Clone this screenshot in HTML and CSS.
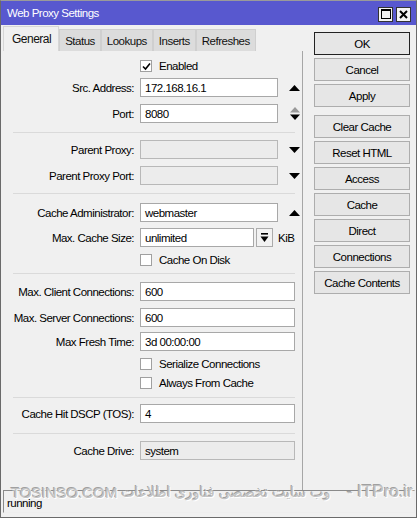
FILE: index.html
```html
<!DOCTYPE html>
<html lang="en">
<head>
    <meta charset="UTF-8">
    <title>Web Proxy Settings</title>
    <link rel="stylesheet" href="styles.css">
</head>
<body>

<div class="window">
    <div class="titlebar">
        <span class="title">Web Proxy Settings</span>
        <div class="title-buttons">
            <span class="tbtn">
                <svg width="10" height="10" viewBox="0 0 10 10"><rect x="0.5" y="0.5" width="9" height="9" fill="none" stroke="#000"/><rect x="0" y="0" width="10" height="2" fill="#000"/></svg>
            </span>
            <span class="tbtn">
                <svg width="9" height="9" viewBox="0 0 9 9"><path d="M1 1L8 8M8 1L1 8" stroke="#000" stroke-width="2"/></svg>
            </span>
        </div>
    </div>

    <div class="body">
        <div class="main">
            <div class="tabs">
                <span class="tab active">General</span>
                <span class="tab">Status</span>
                <span class="tab">Lookups</span>
                <span class="tab">Inserts</span>
                <span class="tab">Refreshes</span>
            </div>

            <div class="panel">
                <!-- enabled / address / port -->
                <div class="section s1">
                    <div class="row check-row r-enabled">
                        <span></span>
                        <label class="check"><span class="box checked"><svg width="9" height="9" viewBox="0 0 9 9"><path d="M1 4.5L3.5 7L8 1.5" fill="none" stroke="#000" stroke-width="1.6"/></svg></span>Enabled</label>
                    </div>
                    <div class="row r-src">
                        <span class="lbl">Src. Address:</span>
                        <span class="input short">172.168.16.1</span>
                        <span class="arrow"><svg width="11" height="6" viewBox="0 0 11 6"><path d="M0 6L5.5 0L11 6Z" fill="#000"/></svg></span>
                    </div>
                    <div class="row r-gap7">
                        <span class="lbl">Port:</span>
                        <span class="input short">8080</span>
                        <span class="arrow updown"><svg width="10" height="13" viewBox="0 0 10 13"><path d="M0 5.5L5 0L10 5.5Z" fill="#999"/><path d="M0 7.5L5 13L10 7.5Z" fill="#000"/></svg></span>
                    </div>
                </div>

                <!-- parent proxy -->
                <div class="section s2">
                    <div class="row">
                        <span class="lbl">Parent Proxy:</span>
                        <span class="input short disabled"></span>
                        <span class="arrow"><svg width="11" height="6" viewBox="0 0 11 6"><path d="M0 0L5.5 6L11 0Z" fill="#000"/></svg></span>
                    </div>
                    <div class="row r-gap7">
                        <span class="lbl">Parent Proxy Port:</span>
                        <span class="input short disabled"></span>
                        <span class="arrow"><svg width="11" height="6" viewBox="0 0 11 6"><path d="M0 0L5.5 6L11 0Z" fill="#000"/></svg></span>
                    </div>
                </div>

                <!-- cache -->
                <div class="section s3">
                    <div class="row">
                        <span class="lbl">Cache Administrator:</span>
                        <span class="input short">webmaster</span>
                        <span class="arrow"><svg width="11" height="6" viewBox="0 0 11 6"><path d="M0 6L5.5 0L11 6Z" fill="#000"/></svg></span>
                    </div>
                    <div class="row r-gap6">
                        <span class="lbl">Max. Cache Size:</span>
                        <span class="combo">
                            <span class="input size">unlimited</span>
                            <span class="drop"><svg width="9" height="10" viewBox="0 0 9 10"><rect x="1" y="0" width="7" height="1.6" fill="#000"/><path d="M0.5 3.5L4.5 9L8.5 3.5Z" fill="#000"/></svg></span>
                            <span class="unit">KiB</span>
                        </span>
                    </div>
                    <div class="row check-row r-disk">
                        <span></span>
                        <label class="check"><span class="box"></span>Cache On Disk</label>
                    </div>
                </div>

                <!-- connections -->
                <div class="section s4">
                    <div class="row">
                        <span class="lbl">Max. Client Connections:</span>
                        <span class="input long">600</span>
                    </div>
                    <div class="row r-gap7">
                        <span class="lbl">Max. Server Connections:</span>
                        <span class="input long">600</span>
                    </div>
                    <div class="row r-gap5">
                        <span class="lbl">Max Fresh Time:</span>
                        <span class="input long">3d 00:00:00</span>
                    </div>
                    <div class="row check-row r-serial">
                        <span></span>
                        <label class="check"><span class="box"></span>Serialize Connections</label>
                    </div>
                    <div class="row check-row r-always">
                        <span></span>
                        <label class="check"><span class="box"></span>Always From Cache</label>
                    </div>
                </div>

                <div class="section s5">
                    <div class="row">
                        <span class="lbl">Cache Hit DSCP (TOS):</span>
                        <span class="input long">4</span>
                    </div>
                </div>

                <div class="section s6">
                    <div class="row">
                        <span class="lbl">Cache Drive:</span>
                        <span class="input long disabled">system</span>
                    </div>
                </div>
            </div>
        </div>

        <div class="side">
            <span class="btn default">OK</span>
            <span class="btn">Cancel</span>
            <span class="btn">Apply</span>
            <span class="btn group">Clear Cache</span>
            <span class="btn">Reset HTML</span>
            <span class="btn">Access</span>
            <span class="btn">Cache</span>
            <span class="btn">Direct</span>
            <span class="btn">Connections</span>
            <span class="btn">Cache Contents</span>
        </div>
    </div>

    <div class="statusbar">
        <span class="status-cell">running</span>
    </div>

    <div class="watermark"><span class="wm-en">TOSINSO.COM</span><span class="fa" dir="rtl">وب سایت تخصصی فناوری اطلاعات</span><span class="wm-it">- ITPro.ir</span></div>
</div>

</body>
</html>
```

FILE: styles.css
```css
body { margin: 0; background: #fff; font-family: "Liberation Sans", Arial, sans-serif; font-size: 11.5px; letter-spacing: -0.5px; color: #000; }

.window { position: relative; width: 417px; height: 518px; box-sizing: border-box; background: #f0f0f0; border: 1px solid #6a6a6a; border-top-color: #9a9a9a; display: flex; flex-direction: column; overflow: hidden; }

.titlebar { height: 24px; background: #5858cf; color: #fff; display: flex; align-items: center; justify-content: space-between; padding: 0 5px 0 6px; font-size: 11.5px; }
.title-buttons { display: flex; gap: 3px; margin-top: 2px; }
.tbtn { width: 13px; height: 13px; background: #f4f4f4; border: 1px solid #333; display: flex; align-items: center; justify-content: center; }

.body { display: flex; flex: 1; padding-left: 2px; }
.main { width: 300px; display: flex; flex-direction: column; }

.tabs { display: flex; height: 26px; padding-top: 1px; box-sizing: border-box; }
.tab { background: #dcdcdc; border: 1px solid #cfcfcf; border-bottom: none; padding: 0 5px; display: flex; align-items: center; margin-top: 3px; color: #111; }
.tab.active { background: #f0f0f0; border-color: #d6d6d6; margin-top: 0; padding: 0 7px 0 8px; font-size: 12px; }

.panel { flex: 1; border-right: 1px solid #a6a6a6; }

.section { margin: 0 7px 0 10px; border-bottom: 1px solid #dadada; }
.section .row { margin-left: -10px; margin-right: -7px; }
.s1 { padding: 6px 0 9px; }
.s2 { padding: 7px 0 8px; }
.s3 { padding: 9px 0 4px; }
.s4 { padding: 8px 0 5px; }
.s5 { padding: 6px 0 10px; }
.s6 { padding: 7px 0 0; border-bottom: none; }

.row { display: grid; grid-template-columns: 131px auto auto; column-gap: 6px; align-items: center; height: 19px; }
.r-gap7 { margin-top: 7px; }
.r-gap6 { margin-top: 6px; }
.r-gap5 { margin-top: 5px; }
.r-src { margin-top: 3px; }
.check-row { height: 18px; }
.r-disk { margin-top: 4px; }
.r-serial { margin-top: 4px; }
.r-always { margin-top: 1px; }

.lbl { text-align: right; white-space: nowrap; }

.input { height: 19px; box-sizing: border-box; background: #fff; border: 1px solid #a8a8a8; padding: 0 4px; display: flex; align-items: center; white-space: nowrap; }
.input.short { width: 138px; }
.input.long { width: 155px; }
.input.size { width: 114px; }
.input.disabled { background: #ececec; border-color: #b8b8b8; }

.arrow { display: flex; align-items: center; padding-left: 3px; }

.combo { display: flex; align-items: center; }
.drop { width: 17px; height: 19px; box-sizing: border-box; border: 1px solid #ababab; background: #f2f2f2; margin-left: 2px; display: flex; align-items: center; justify-content: center; }
.unit { margin-left: 5px; }

.check { display: flex; align-items: center; gap: 7px; }
.box { width: 12px; height: 12px; box-sizing: border-box; border: 1px solid #a0a0a0; background: #fff; display: flex; align-items: center; justify-content: center; }

.side { display: flex; flex-direction: column; gap: 3px; padding: 7px 0 0 11px; }
.btn { width: 96px; height: 23px; box-sizing: border-box; background: #e6e6e6; border: 1px solid #adadad; display: flex; align-items: center; justify-content: center; }
.btn.default { border: 1px solid #222; box-shadow: inset 0 0 0 1px #e6e6e6; }
.btn.group { margin-top: 5px; }

.statusbar { height: 21px; margin: 0 1px 4px 2px; border: 1px solid #8a8a8a; border-right-color: #eee; border-bottom-color: #eee; display: flex; align-items: center; }
.status-cell { padding-left: 3px; padding-top: 3px; }

.watermark { position: absolute; left: 10px; top: 481px; width: 402px; display: flex; align-items: center; gap: 4px; color: #c2c2c2; text-shadow: 1px 1px 0 #fff, -1px -1px 0 #a0a0a0; white-space: nowrap; letter-spacing: 0; }
.wm-en { font-size: 15px; }
.wm-it { font-size: 17px; margin-left: auto; }
.watermark .fa { font-family: "DejaVu Sans", sans-serif; font-size: 14px; unicode-bidi: isolate; }
```
